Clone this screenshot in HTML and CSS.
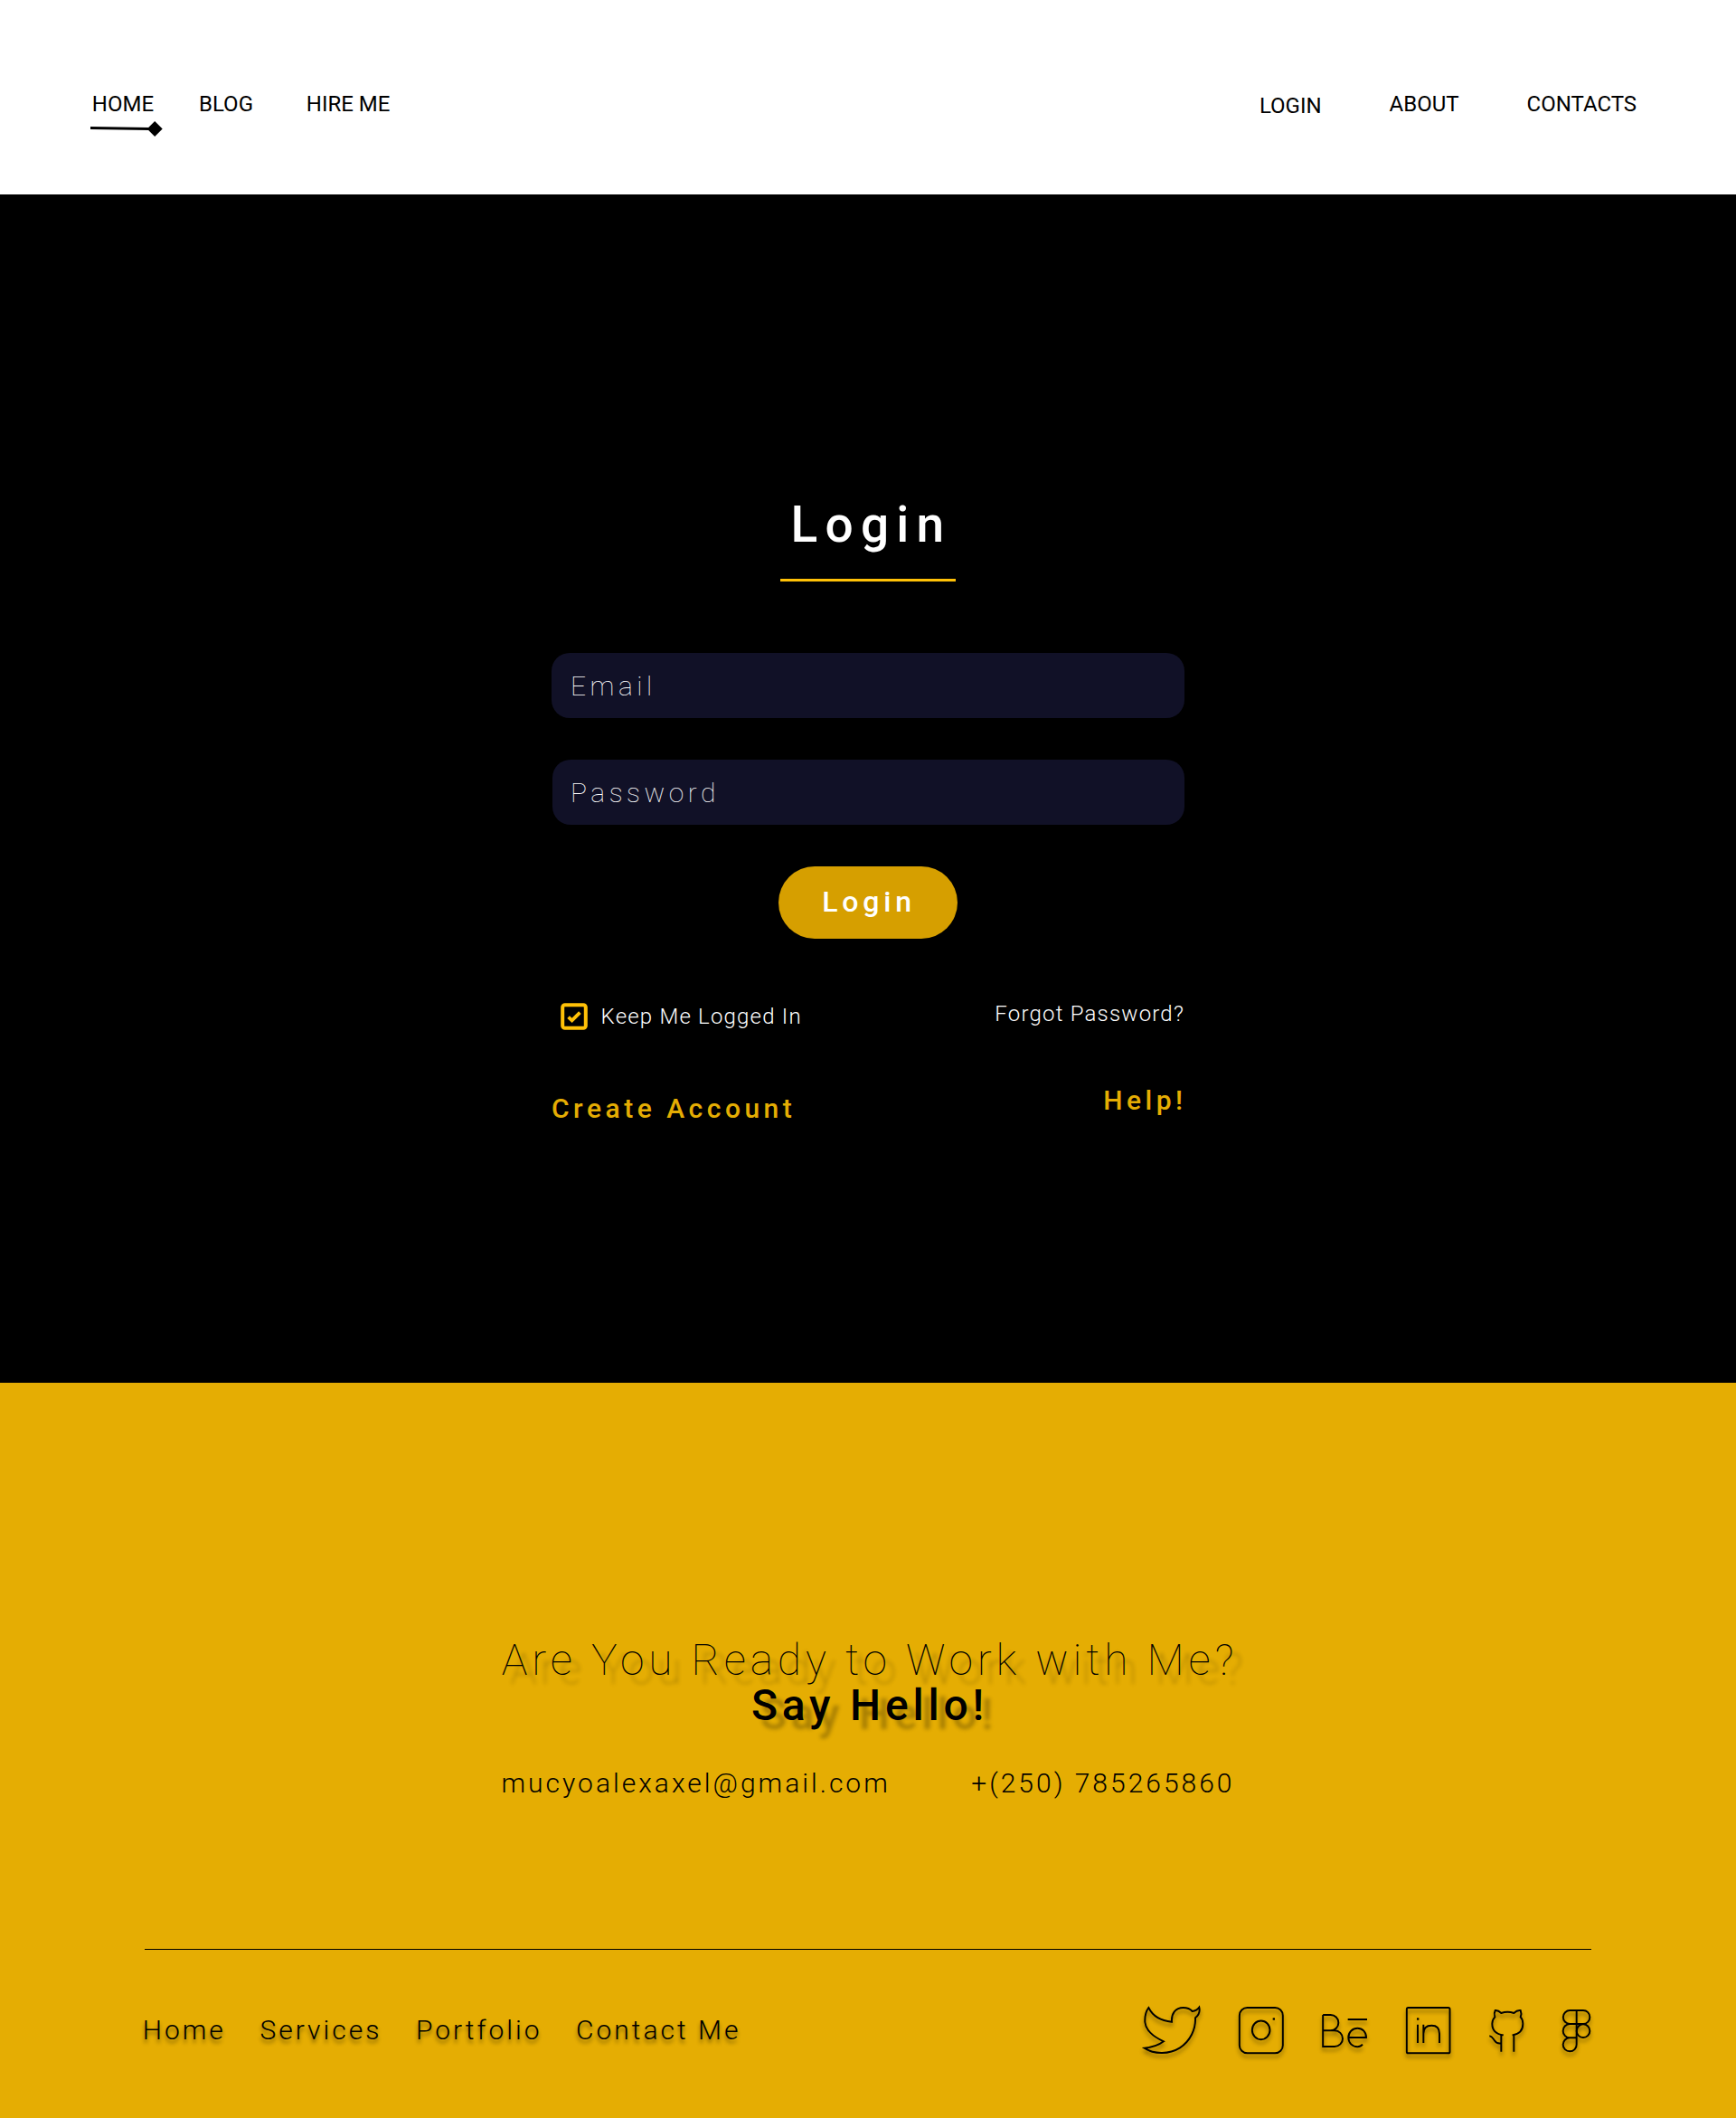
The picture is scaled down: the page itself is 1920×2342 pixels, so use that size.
FILE: index.html
```html
<!DOCTYPE html>
<html lang="en">
<head>
<meta charset="utf-8">
<title>Login</title>
<link rel="stylesheet" href="styles.css">
</head>
<body>
<header class="header">
  <nav class="nav-left">
    <div class="nav-active">
      <a class="nav-link">HOME</a>
      <svg class="nav-marker" width="80" height="18" viewBox="60 159 240 54"><path d="M60 180 L255 183 V192 L60 189Z"/><path d="M273.5 162 L299 187.5 L273.5 213 L248 187.5Z"/></svg>
    </div>
    <a class="nav-link nav-blog">BLOG</a>
    <a class="nav-link nav-hire">HIRE ME</a>
  </nav>
  <nav class="nav-right">
    <a class="nav-link nav-login">LOGIN</a>
    <a class="nav-link">ABOUT</a>
    <a class="nav-link">CONTACTS</a>
  </nav>
</header>

<main class="main">
  <h1 class="title">Login</h1>
  <div class="title-rule"></div>
  <form class="form">
    <input class="field" type="text" placeholder="Email">
    <input class="field field-password" type="text" placeholder="Password">
    <button class="submit" type="button">Login</button>
    <div class="options">
      <label class="keep">
        <svg class="checkbox" width="30" height="30" viewBox="0 0 30 30"><rect x="2.2" y="2.2" width="25.6" height="25.6" rx="2.6"/><path d="M8.6 15.6 L12.6 19.4 L21.4 10.6"/></svg>
        <span class="keep-text">Keep Me Logged In</span>
      </label>
      <a class="forgot">Forgot Password?</a>
    </div>
    <div class="links">
      <a class="create">Create Account</a>
      <a class="help">Help!</a>
    </div>
  </form>
</main>

<footer class="footer">
  <p class="question">Are You Ready to Work with Me?</p>
  <p class="hello">Say Hello!</p>
  <div class="contacts">
    <span>mucyoalexaxel@gmail.com</span>
    <span>+(250) 785265860</span>
  </div>
  <div class="footer-rule"></div>
  <div class="footer-bar">
    <nav class="footer-nav">
      <a>Home</a>
      <a>Services</a>
      <a>Portfolio</a>
      <a>Contact Me</a>
    </nav>
    <div class="social">
      <svg class="icon twitter" width="64" height="54" viewBox="42 54 192 162"><path d="M61 60 C75 88 105 104 138 107 C136 80 150 60 176 60 C190 60 199 64 206 72 C215 71 224 66 229 59 C232 72 228 84 216 94 C218 130 200 170 165 193 C130 215 80 216 47 194 C75 192 95 184 111 172 C85 160 52 140 49 108 C48 88 52 72 61 60Z"/></svg>
      <svg class="icon instagram" width="50" height="54" viewBox="360 54 150 162"><rect x="362.5" y="60" width="144" height="151" rx="26"/><ellipse cx="434" cy="134.5" rx="29.5" ry="31"/><path class="dot" d="M473 94h7v7h-7z"/></svg>
      <svg class="icon behance" width="51" height="54" viewBox="635 54 153 162"><path d="M638.5 84 V189 H677 A27 26.5 0 0 0 677 136 H638.5 M638.5 84 H664 A26 26 0 0 1 664 136 M721 99 H785 M723 159 H782 C782 141 770 128.5 753 128.5 C736 128.5 723 142 723 159 C723 177 736 189.5 753 189.5 C760 189.5 766 187 770 182"/></svg>
      <svg class="icon linkedin" width="50" height="54" viewBox="165 54 150 162"><rect x="167.5" y="60" width="143" height="151" rx="5"/><path d="M204 116 V177 M223 116 V177 M223 146 C223 128 234 119 250 119 C266 119 276 128 276 146 V177"/><path class="dot" d="M201 94h7v7h-7z"/></svg>
      <svg class="icon github" width="39" height="54" viewBox="440 54 117 162"><path d="M480 206 V151 H487 C465 148 450 135 450 113 C450 103 453 97 459 91 C456 82 457 75 460 69 C468 68 474 72 480 78 C492 74 510 74 522 78 C528 72 536 68 544 69 C547 76 547 84 544 91 C550 97 552 104 552 113 C552 135 538 148 517 151 H522 V206 M441 154 C450 155 453 163 457 168 C462 176 470 180 480 178"/></svg>
      <svg class="icon figma" width="32" height="54" viewBox="684 54 96 162"><path d="M709 69 H753 A22 22.5 0 0 1 753 114 H709 A22.5 22.5 0 0 1 709 69Z M731 114 H709 A22.5 22.5 0 0 0 709 160 H731 M709 160 A22.5 22.5 0 1 0 731 182 V69"/><circle cx="753" cy="137" r="22"/></svg>
    </div>
  </div>
</footer>
</body>
</html>
```
FILE: styles.css
```css
* { box-sizing: border-box; margin: 0; padding: 0; }

body {
  width: 1920px;
  font-family: Roboto, "Liberation Sans", sans-serif;
  background: #000;
}

.header {
  display: flex;
  justify-content: space-between;
  height: 215px;
  padding: 101px 109.9px 0 100px;
  background: #fff;
}
.nav-left, .nav-right { display: flex; align-items: flex-start; }
.nav-right { gap: 75px; }
.nav-link {
  display: block;
  font-size: 24px;
  line-height: 28px;
  color: #000;
}
.nav-active { width: 80px; }
.nav-active .nav-link { padding-left: 1.8px; }
.nav-marker { display: block; margin-top: 4px; }
.nav-blog { margin-left: 40px; }
.nav-hire { margin-left: 58.8px; }
.nav-login { margin-top: 2px; }

.main {
  display: flex;
  flex-direction: column;
  align-items: center;
  height: 1314px;
  padding-top: 333px;
  background: #000;
}
.title {
  padding-left: 7px;
  font-size: 55px;
  font-weight: 500;
  line-height: 64px;
  letter-spacing: 0.15em;
  color: #fff;
}
.title-rule { width: 194px; height: 3px; margin-top: 28px; background: #ffc107; }

.form {
  display: flex;
  flex-direction: column;
  align-items: center;
  width: 700px;
  margin-top: 79px;
}
.field {
  width: 700px;
  height: 72px;
  padding: 1px 21px 0;
  border: 0;
  border-radius: 20px;
  background: #111127;
  font: 100 30px Roboto, sans-serif;
  letter-spacing: 0.15em;
  color: #fff;
}
.field::placeholder { color: #fff; opacity: 1; }
.field-password { width: 699px; margin: 46px 0 0 1px; padding-left: 20px; }
.submit {
  width: 198px;
  height: 80px;
  margin-top: 46px;
  padding: 0 0 2px 2px;
  border: 0;
  border-radius: 40px;
  background: #d69f00;
  font: 500 32px Roboto, sans-serif;
  letter-spacing: 0.15em;
  color: #fff;
}

.options, .links {
  display: flex;
  justify-content: space-between;
  align-items: flex-start;
  width: 700px;
}
.options { margin-top: 69px; }
.keep { display: flex; align-items: flex-start; margin: 2px 0 0 10px; }
.checkbox { fill: none; stroke: #ffc107; stroke-width: 4; }
.checkbox path { stroke-width: 3.8; }
.keep-text, .forgot {
  font-size: 24px;
  font-weight: 300;
  line-height: 28px;
  letter-spacing: 0.05em;
  color: #fff;
}
.keep-text { margin: 1px 0 0 14.6px; }
.links {
  height: 44px;
  margin-top: 60px;
  font-size: 30px;
  font-weight: 500;
  line-height: 35px;
  letter-spacing: 0.15em;
  color: #e5ad03;
}
.create { margin-top: 9px; }
.help { margin-right: -2.5px; }

.footer {
  display: flex;
  flex-direction: column;
  align-items: center;
  height: 813px;
  padding-top: 282px;
  background: #e5ad03;
  color: #000;
}
.question, .hello {
  font-size: 48px;
  line-height: 49px;
  letter-spacing: 0.1em;
  text-shadow: 10px 10px 4px rgba(0, 0, 0, 0.27);
}
.question { padding-left: 4px; font-weight: 100; }
.hello { margin-top: 1px; padding-left: 4px; font-weight: 500; }
.contacts {
  display: flex;
  justify-content: space-between;
  width: 811px;
  margin-top: 44px;
  font-size: 30px;
  font-weight: 300;
  line-height: 35px;
  letter-spacing: 0.1em;
}
.footer-rule { width: 1600px; height: 1px; margin-top: 166px; background: #000; }
.footer-bar {
  display: flex;
  justify-content: space-between;
  align-items: flex-start;
  width: 1600px;
  margin-top: 62px;
}
.footer-nav {
  display: flex;
  gap: 37.5px;
  margin: 9px 0 0 -2.3px;
  font-size: 30px;
  font-weight: 300;
  line-height: 35px;
  letter-spacing: 0.1em;
  text-shadow: 0 4px 4px rgba(0, 0, 0, 0.45);
}
.social { display: flex; }
.icon {
  display: block;
  overflow: visible;
  fill: none;
  stroke: #000;
  stroke-width: 5.8;
  filter: drop-shadow(0 4px 2px rgba(0, 0, 0, 0.4));
}
.icon .dot { fill: #000; stroke: none; }
.instagram { margin-left: 42px; }
.behance { margin-left: 41.7px; }
.linkedin { margin-left: 42.3px; }
.github { margin-left: 41.7px; }
.figma { margin-left: 42.3px; }
```
